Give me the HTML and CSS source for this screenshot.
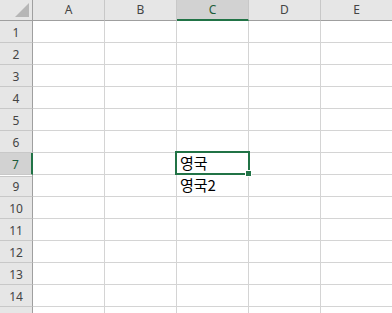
FILE: index.html
```html
<!DOCTYPE html>
<html lang="ko">
<head>
    <meta charset="UTF-8">
    <title>Sheet1</title>
    <link rel="stylesheet" href="styles.css">
</head>
<body>

<div class="sheet">
    <div class="corner"><span class="corner-tri"></span></div>
    <div class="col-head">A</div>
    <div class="col-head">B</div>
    <div class="col-head active">C</div>
    <div class="col-head">D</div>
    <div class="col-head">E</div>

    <div class="row-head">1</div><div class="cell"></div><div class="cell"></div><div class="cell"></div><div class="cell"></div><div class="cell"></div>
    <div class="row-head">2</div><div class="cell"></div><div class="cell"></div><div class="cell"></div><div class="cell"></div><div class="cell"></div>
    <div class="row-head">3</div><div class="cell"></div><div class="cell"></div><div class="cell"></div><div class="cell"></div><div class="cell"></div>
    <div class="row-head">4</div><div class="cell"></div><div class="cell"></div><div class="cell"></div><div class="cell"></div><div class="cell"></div>
    <div class="row-head">5</div><div class="cell"></div><div class="cell"></div><div class="cell"></div><div class="cell"></div><div class="cell"></div>
    <div class="row-head">6</div><div class="cell"></div><div class="cell"></div><div class="cell"></div><div class="cell"></div><div class="cell"></div>
    <div class="row-head active">7</div><div class="cell"></div><div class="cell"></div><div class="cell">영국</div><div class="cell"></div><div class="cell"></div>
    <div class="row-head after-hidden">9</div><div class="cell"></div><div class="cell"></div><div class="cell">영국2</div><div class="cell"></div><div class="cell"></div>
    <div class="row-head">10</div><div class="cell"></div><div class="cell"></div><div class="cell"></div><div class="cell"></div><div class="cell"></div>
    <div class="row-head">11</div><div class="cell"></div><div class="cell"></div><div class="cell"></div><div class="cell"></div><div class="cell"></div>
    <div class="row-head">12</div><div class="cell"></div><div class="cell"></div><div class="cell"></div><div class="cell"></div><div class="cell"></div>
    <div class="row-head">13</div><div class="cell"></div><div class="cell"></div><div class="cell"></div><div class="cell"></div><div class="cell"></div>
    <div class="row-head">14</div><div class="cell"></div><div class="cell"></div><div class="cell"></div><div class="cell"></div><div class="cell"></div>
    <div class="row-head"></div><div class="cell"></div><div class="cell"></div><div class="cell"></div><div class="cell"></div><div class="cell"></div>

    <!-- selection frame over C7 -->
    <div class="selection"><span class="fill-handle"></span></div>
</div>

</body>
</html>
```

FILE: styles.css
```css
html, body {
    margin: 0;
    padding: 0;
    background: #fff;
}

body {
    width: 392px;
    height: 313px;
    overflow: hidden;
}

.sheet {
    position: relative;
    display: grid;
    grid-template-columns: 33px repeat(5, 72px);
    grid-template-rows: 21px repeat(13, 22px) 7px;
    height: 313px;
    overflow: hidden;
    font-family: "Noto Sans", "Noto Sans CJK KR", sans-serif;
}

.sheet > div {
    box-sizing: border-box;
}

.corner {
    position: relative;
    background: #e6e6e6;
    border-right: 1px solid #9f9f9f;
    border-bottom: 1px solid #9f9f9f;
}

.corner-tri {
    position: absolute;
    right: 3px;
    bottom: 3px;
    width: 0;
    height: 0;
    border-style: solid;
    border-width: 0 0 14px 14px;
    border-color: transparent transparent #b6b6b6 transparent;
}

.col-head {
    display: flex;
    justify-content: center;
    align-items: center;
    background: #e6e6e6;
    border-right: 1px solid #c8c8c8;
    border-bottom: 1px solid #9f9f9f;
    font-size: 12px;
    color: #444;
    padding-bottom: 1px;
}

.col-head.active {
    background: #d2d2d2;
    border-bottom: 2px solid #217346;
    color: #1d5c39;
    padding-bottom: 0;
}

.row-head {
    display: flex;
    justify-content: center;
    align-items: center;
    background: #e6e6e6;
    border-right: 1px solid #9f9f9f;
    border-bottom: 1px solid #c8c8c8;
    font-size: 12px;
    color: #444;
    padding-top: 1px;
}

.row-head.active {
    background: #d2d2d2;
    border-right: 2px solid #217346;
    color: #1d5c39;
}

.row-head.after-hidden {
    box-shadow: inset 0 1px 0 #fff, inset 0 2px 0 #c8c8c8;
}

.cell {
    display: flex;
    align-items: flex-end;
    padding: 0 3px 2px;
    border-right: 1px solid #d4d4d4;
    border-bottom: 1px solid #d4d4d4;
    font-family: "Noto Sans CJK KR", "Noto Sans", sans-serif;
    font-size: 15px;
    line-height: 18px;
    color: #000;
    white-space: nowrap;
}

.selection {
    position: absolute;
    left: 175px;
    top: 151px;
    width: 75px;
    height: 24px;
    box-sizing: border-box;
    border: 2px solid #217346;
    pointer-events: none;
}

.fill-handle {
    position: absolute;
    right: -4px;
    bottom: -4px;
    width: 5px;
    height: 5px;
    background: #217346;
    border: 1px solid #fff;
}
```
